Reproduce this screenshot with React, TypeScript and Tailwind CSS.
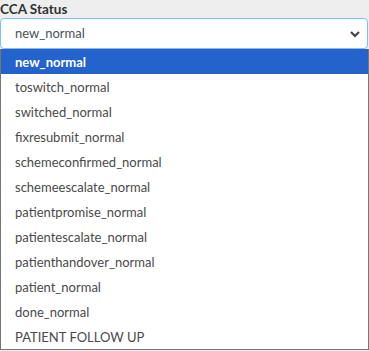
const options = [
  "new_normal",
  "toswitch_normal",
  "switched_normal",
  "fixresubmit_normal",
  "schemeconfirmed_normal",
  "schemeescalate_normal",
  "patientpromise_normal",
  "patientescalate_normal",
  "patienthandover_normal",
  "patient_normal",
  "done_normal",
  "PATIENT FOLLOW UP",
];

export default function App() {
  const selected = "new_normal";

  return (
    <div className="w-[369px] h-[351px] bg-[#eeeeee] overflow-hidden font-['Lato',sans-serif]">
      <label className="block h-[18px] pt-[1px] text-[13.5px] leading-[16px] font-bold text-[#333333]">
        CCA Status
      </label>

      {/* select box */}
      <div className="flex items-center justify-between h-[31px] w-[368px] pl-[14px] pr-[6px] bg-white border border-[#80bdff] rounded-[4px]">
        <span className="text-[13px] text-[#495057]">{selected}</span>
        <svg width="12" height="12" viewBox="0 0 12 12">
          <path d="M2 4 L6 8 L10 4" fill="none" stroke="#444" strokeWidth="2.2" />
        </svg>
      </div>

      {/* open list */}
      <ul className="w-[369px] bg-white border border-t-0 border-[#767676]">
        {options.map((opt) => (
          <li
            key={opt}
            className={
              opt === selected
                ? "h-[25px] pl-[14px] pt-[2px] flex items-center text-[13px] font-bold text-white bg-[#2563cc]"
                : "h-[25px] pl-[14px] pt-[2px] flex items-center text-[13px] text-[#4a4a4a]"
            }
          >
            {opt}
          </li>
        ))}
      </ul>
    </div>
  );
}
